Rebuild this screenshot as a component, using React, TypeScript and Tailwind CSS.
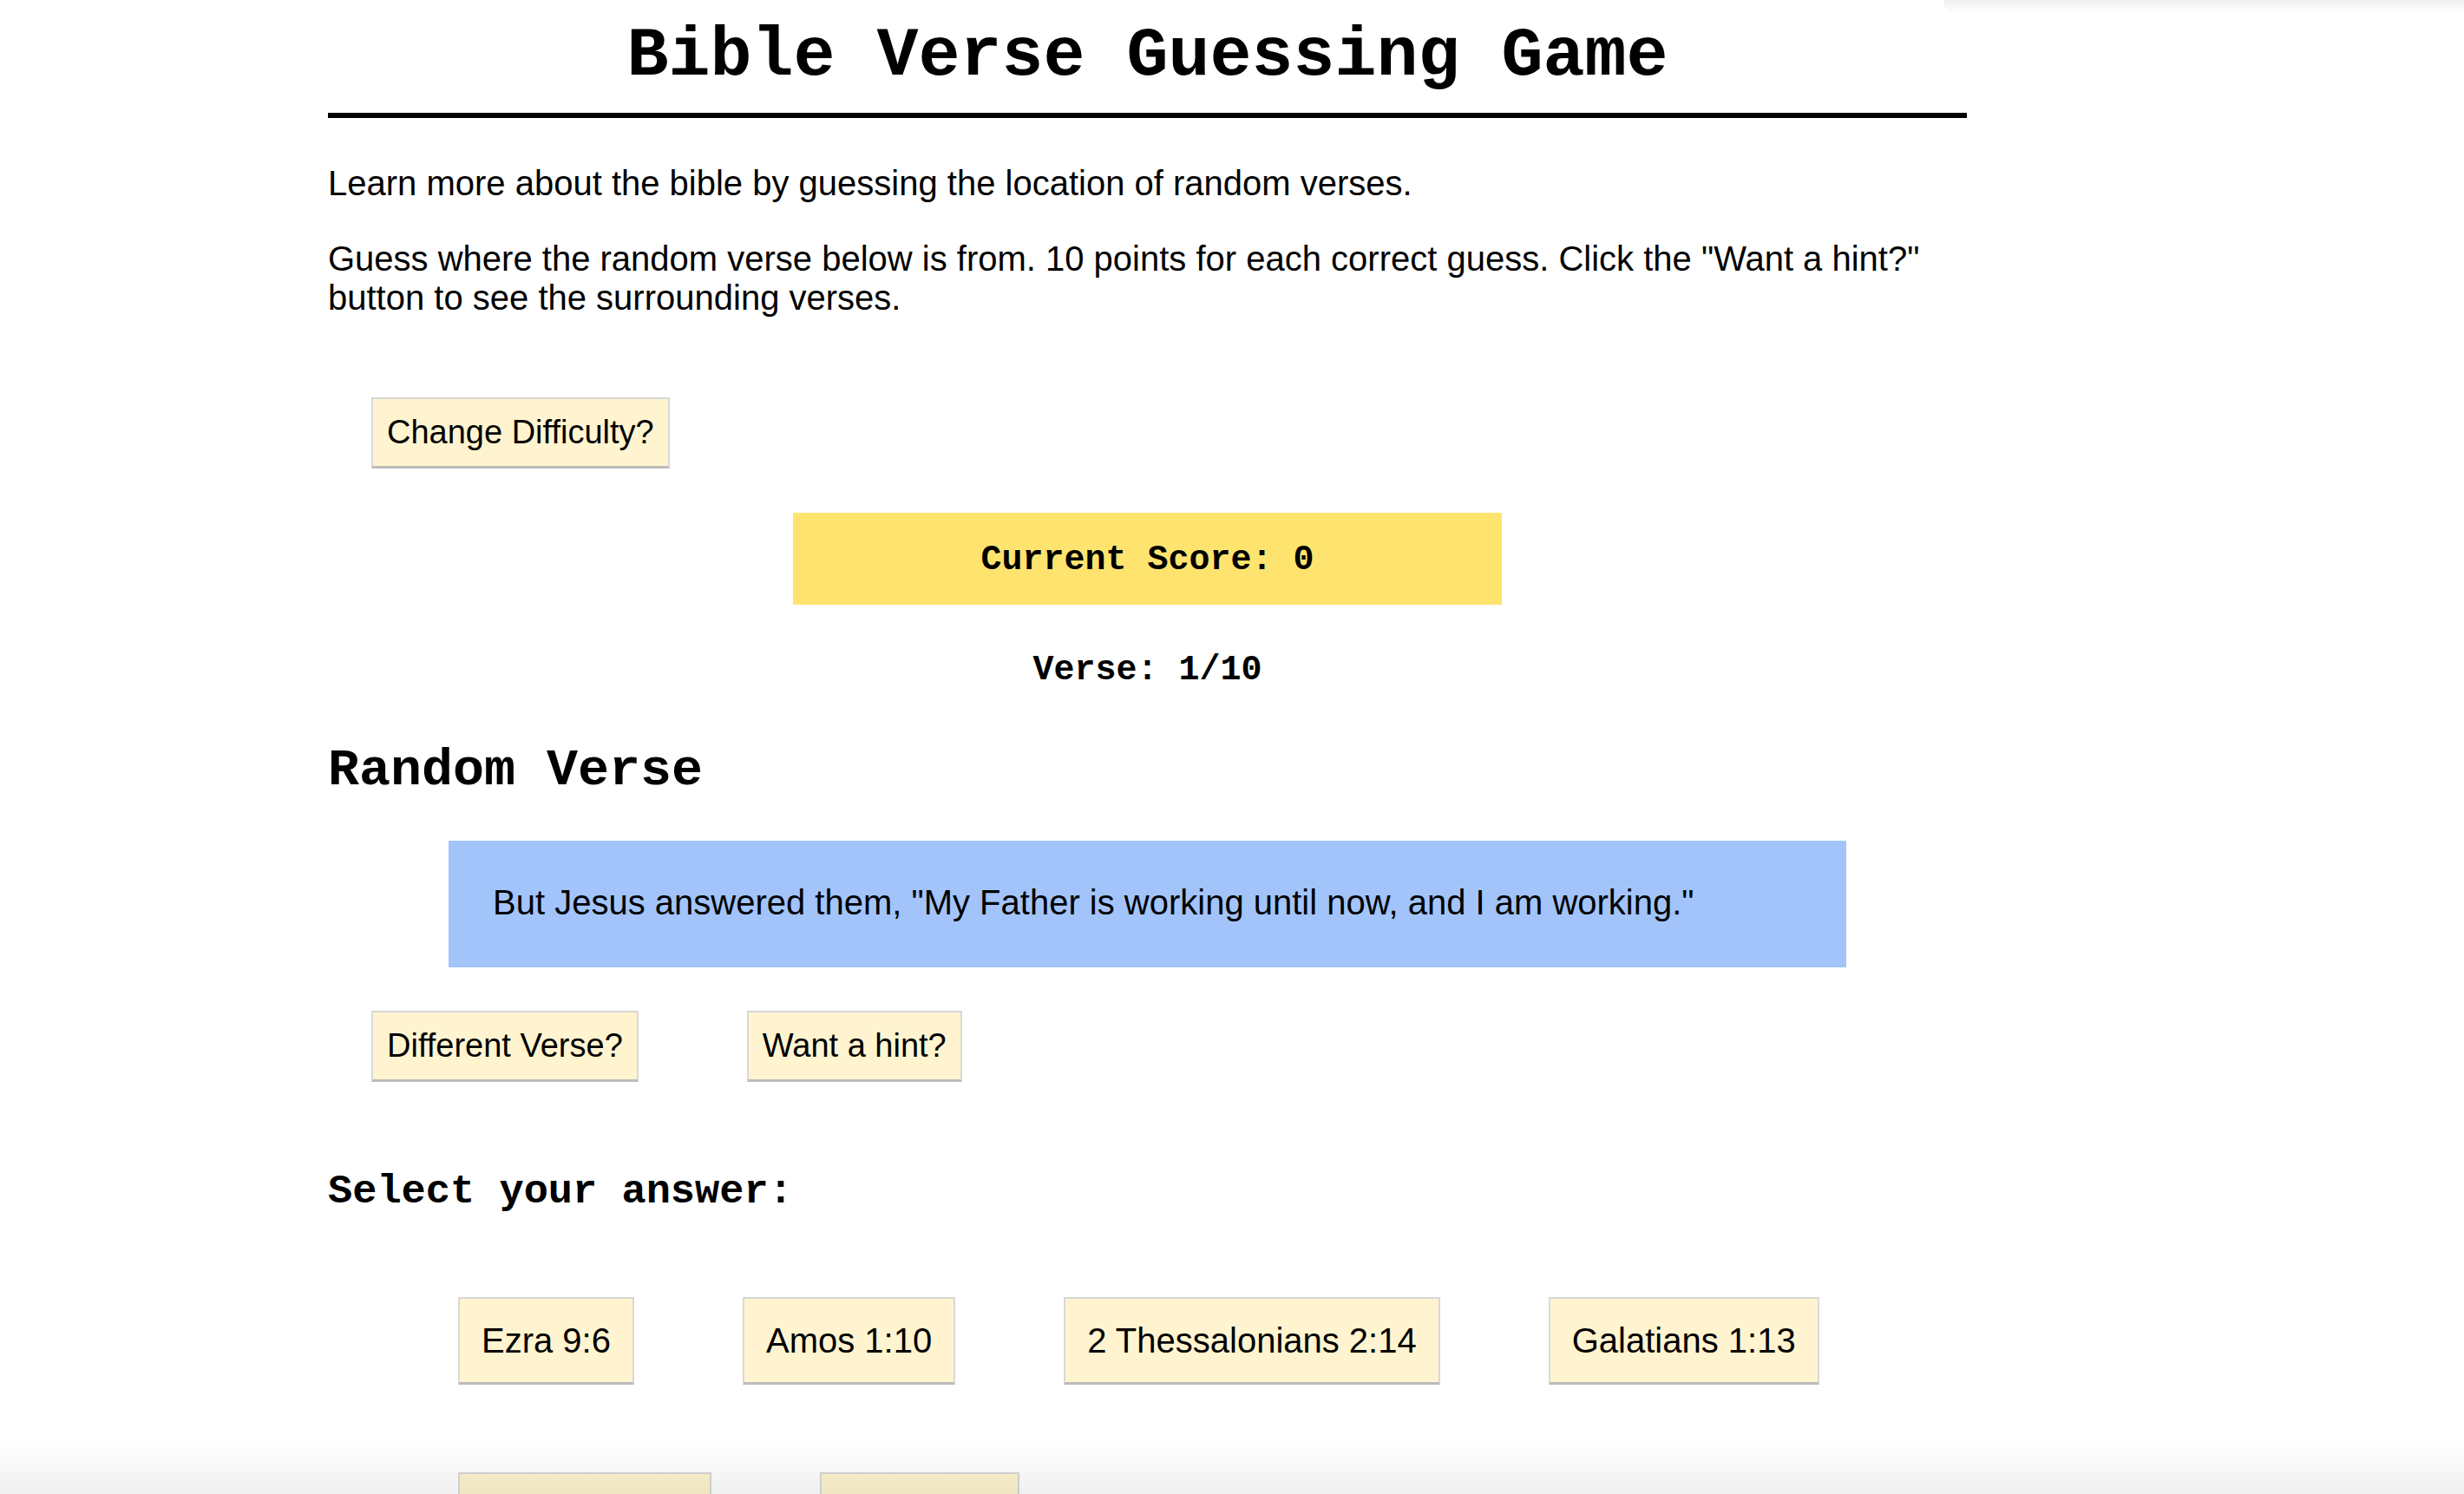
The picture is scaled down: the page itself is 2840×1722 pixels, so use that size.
const ANSWERS_ROW = ["Ezra 9:6", "Amos 1:10", "2 Thessalonians 2:14", "Galatians 1:13", "Romans 12:2", "John 5:17"] as const;

const mono = { fontFamily: '"Liberation Mono", "Courier New", monospace' };

function SmallButton({ label }: { label: string }) {
  return (
    <button className="h-[82px] border-x-2 border-t-2 border-b-[3px] border-x-[#d8d8d8] border-t-[#d6d6d6] border-b-[#bcbcbc] bg-[#fff4cf] px-[16px] text-[38px] leading-[45px] text-black">
      {label}
    </button>
  );
}

export default function App() {
  return (
    <div
      className="relative h-[1722px] overflow-hidden bg-white text-black"
      style={{ fontFamily: '"Liberation Sans", Arial, sans-serif' }}
    >
      <div className="ml-[378px] w-[1889px]">
        <h1
          className="border-b-[6px] border-black pt-[19px] pb-[19px] text-center text-[80px] font-bold leading-[92px]"
          style={mono}
        >
          Bible Verse Guessing Game
        </h1>

        <p className="mt-[53px] text-[40px] leading-[45px]">
          Learn more about the bible by guessing the location of random verses.
        </p>
        <p className="mt-[42px] text-[40px] leading-[45px]">
          Guess where the random verse below is from. 10 points for each correct
          guess. Click the "Want a hint?" button to see the surrounding verses.
        </p>

        <div className="mt-[92px] pl-[50px]">
          <SmallButton label="Change Difficulty?" />
        </div>

        <div
          className="mx-auto mt-[51px] h-[106px] w-[817px] bg-[#fee46e] pt-[32px] text-center text-[40px] font-bold leading-[46px]"
          style={mono}
        >
          Current Score: 0
        </div>

        <div className="mt-[53px] text-center text-[40px] font-bold leading-[46px]" style={mono}>
          Verse: 1/10
        </div>

        <h2 className="mt-[58px] text-[60px] font-bold leading-[68px]" style={mono}>
          Random Verse
        </h2>

        <div className="mx-auto mt-[47px] h-[146px] w-[1611px] bg-[#a2c4fb] pt-[49px] pl-[51px] text-[40px] leading-[45px]">
          But Jesus answered them, "My Father is working until now, and I am working."
        </div>

        <div className="mt-[50px] flex gap-[125px] pl-[50px]">
          <SmallButton label="Different Verse?" />
          <SmallButton label="Want a hint?" />
        </div>

        <h3 className="mt-[100px] text-[47px] font-bold leading-[54px]" style={mono}>
          Select your answer:
        </h3>

        <div className="mt-[94px] flex flex-wrap gap-x-[125px] gap-y-[101px] pl-[150px]">
          {ANSWERS_ROW.map((a) => (
            <button
              key={a}
              className="h-[101px] border-x-2 border-t-2 border-b-[3px] border-x-[#d8d8d8] border-t-[#d6d6d6] border-b-[#bcbcbc] bg-[#fff4cf] px-[25px] text-[40px] leading-[46px] text-black"
            >
              {a}
            </button>
          ))}
        </div>
      </div>

      <div className="pointer-events-none absolute top-0 right-0 h-[16px] w-[600px] rounded-bl-[40px] bg-gradient-to-b from-black/[0.06] to-transparent" />
      <div className="pointer-events-none absolute right-0 bottom-0 left-0 h-[60px] bg-gradient-to-b from-transparent to-black/[0.06]" />
    </div>
  );
}
